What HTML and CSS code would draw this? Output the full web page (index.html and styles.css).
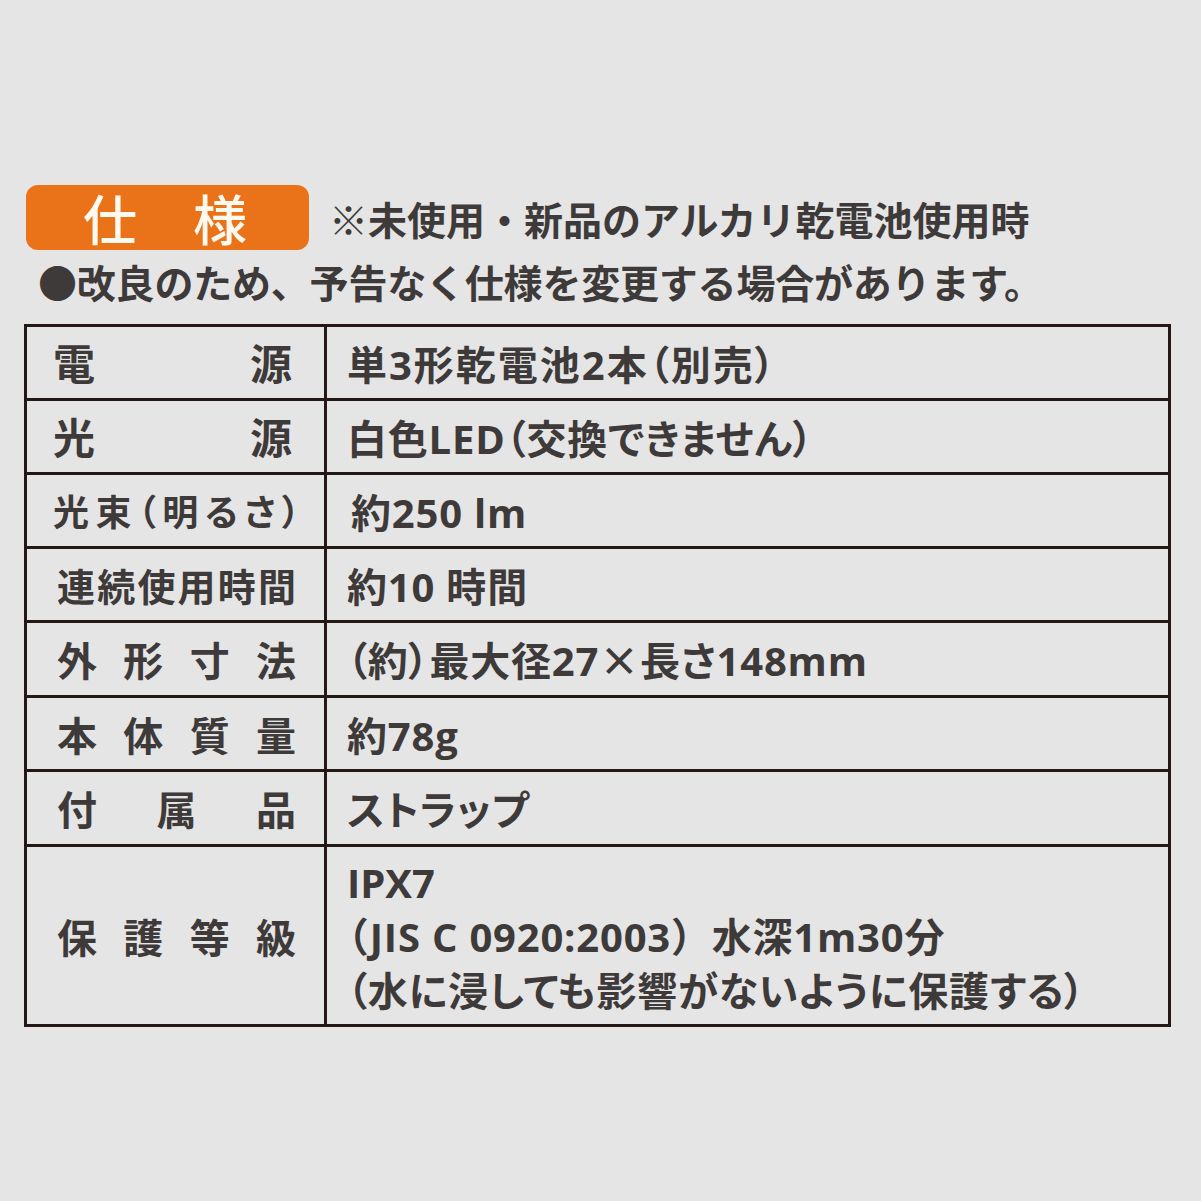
FILE: index.html
```html
<!DOCTYPE html>
<html lang="ja">
<head>
<meta charset="utf-8">
<title>仕様</title>
<link rel="stylesheet" href="styles.css">
</head>
<body>
<div class="page">
  <div class="head">
    <div class="badge">仕　様</div>
    <div class="note">※未使用・新品のアルカリ乾電池使用時</div>
  </div>
  <div class="notice">●改良のため、予告なく仕様を変更する場合があります。</div>
  <div class="spec">
    <div class="label big"><span>電　源</span></div>
    <div class="value wide">単3形乾電池2本（別売）</div>
    <div class="label big"><span>光　源</span></div>
    <div class="value">白色LED（交換できません）</div>
    <div class="label small"><span>光束（明るさ）</span></div>
    <div class="value shift">約250 lm</div>
    <div class="label mid"><span>連続使用時間</span></div>
    <div class="value">約10 時間</div>
    <div class="label"><span>外形寸法</span></div>
    <div class="value">（約）最大径27<span class="cjk">×</span>長さ148mm</div>
    <div class="label"><span>本体質量</span></div>
    <div class="value">約78g</div>
    <div class="label"><span>付属品</span></div>
    <div class="value">ストラップ</div>
    <div class="label"><span>保護等級</span></div>
    <div class="value multi">
      <span class="line">IPX7</span>
      <span class="line full"><span class="open">（</span>JIS C 0920:2003）水深1m30分</span>
      <span class="line spaced">（水に浸しても影響がないように保護する）</span>
    </div>
  </div>
</div>
</body>
</html>
```
FILE: styles.css
```css
html, body {
  margin: 0;
  padding: 0;
  background: #e5e5e5;
}
body {
  width: 1201px;
  height: 1201px;
  font-family: "Noto Sans CJK JP", sans-serif;
  color: #3e3a39;
}
.page {
  padding: 185px 0 0 24px;
}
.head {
  display: flex;
  align-items: center;
  height: 65px;
}
.badge {
  width: 283px;
  height: 65px;
  margin-left: 2px;
  box-sizing: border-box;
  background: #ea7219;
  border-radius: 12px;
  color: #fffaf0;
  font-size: 54px;
  font-weight: 500;
  line-height: 65px;
  letter-spacing: 1px;
  padding-left: 57px;
  white-space: nowrap;
}
.note {
  margin-left: 20px;
  font-size: 39px;
  font-weight: 700;
  line-height: 65px;
  padding-top: 2px;
  white-space: nowrap;
}
.notice {
  margin-left: 14px;
  font-size: 39px;
  font-weight: 700;
  line-height: 40px;
  margin-top: 11px;
  white-space: nowrap;
  letter-spacing: -0.2px;
}
.spec {
  margin-top: 23px;
  width: 1147px;
  box-sizing: border-box;
  display: grid;
  grid-template-columns: 297px 1fr;
  grid-template-rows: 71px 71px 71px 71px 72px 71px 72px 177px;
  gap: 3px;
  padding: 3px;
  background: #231815;
}
.label, .value {
  background: #e5e5e5;
  font-weight: 700;
  display: flex;
  align-items: center;
}
.label {
  padding: 0 28px 0 30px;
  font-size: 40px;
}
.label span {
  display: block;
  width: 100%;
  text-align: justify;
  text-align-last: justify;
  line-height: 1.2;
}
.label.big {
  font-size: 42px;
  padding: 0 32px 0 26px;
}
.label.small {
  font-size: 36px;
  padding: 0 24px 0 26px;
  font-feature-settings: "palt" 1;
}
.label.mid {
  font-size: 38px;
}
.value {
  padding-left: 20px;
  font-size: 40px;
  font-family: "Open Sans", "Noto Sans CJK JP", sans-serif;
  font-feature-settings: "palt" 1;
  white-space: nowrap;
  letter-spacing: 0.8px;
}
.value.wide {
  letter-spacing: 2px;
}
.value.shift {
  padding-left: 24px;
}
.value .cjk {
  font-family: "Noto Sans CJK JP", sans-serif;
  font-feature-settings: normal;
}
.value.multi {
  flex-direction: column;
  align-items: flex-start;
  justify-content: center;
  letter-spacing: 0;
  padding-top: 2px;
}
.line {
  display: block;
  line-height: 54px;
}
.line.full {
  font-feature-settings: normal;
  letter-spacing: 0.8px;
}
.line.full .open {
  font-feature-settings: "palt" 1;
  margin-right: 2px;
}
.line.spaced {
  letter-spacing: 0.8px;
}
```
